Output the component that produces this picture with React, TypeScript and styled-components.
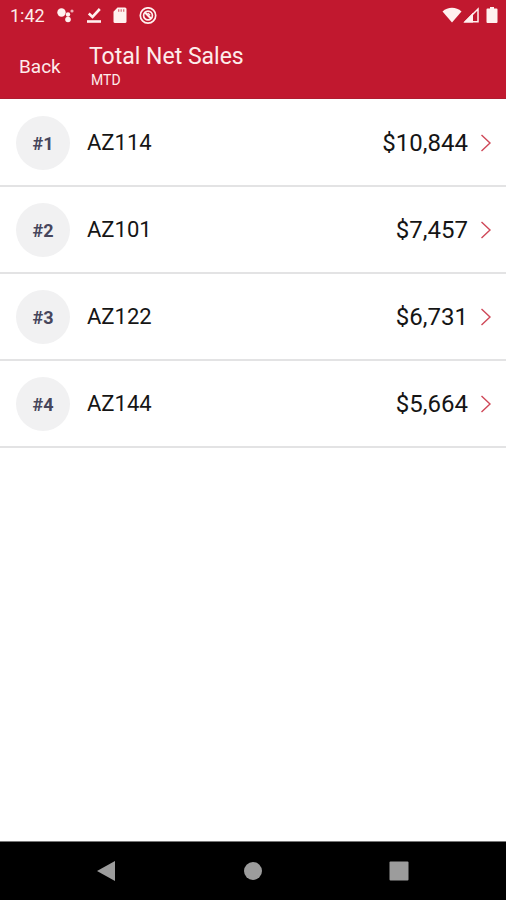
import React from "react";
import styled, { createGlobalStyle } from "styled-components";

const GlobalStyle = createGlobalStyle`
  *, *::before, *::after { box-sizing: border-box; }
  body { margin: 0; background: #fff; font-family: Roboto, "Liberation Sans", sans-serif; }
  button { font: inherit; color: inherit; border: 0; padding: 0; background: none; cursor: pointer; }
`;

const Screen = styled.div`
  display: flex;
  flex-direction: column;
  min-height: 100vh;
`;

const Header = styled.header`
  background: #c1182f;
  color: #fdeceb;
  border-bottom: 1px solid #b01c30;
`;

const StatusBar = styled.div`
  display: flex;
  justify-content: space-between;
  align-items: center;
  height: 32px;
  padding: 0 8px 0 10px;
`;

const Cluster = styled.div<{ $gap: number }>`
  display: flex;
  align-items: center;
  gap: ${({ $gap }) => $gap}px;
  svg { display: block; }
`;

const Clock = styled.time`
  font-size: 18px;
  line-height: 32px;
`;

const TitleBar = styled.div`
  display: flex;
  align-items: center;
  height: 66px;
  padding: 3px 19px 0;
`;

const BackButton = styled.button`
  width: 70px;
  font-size: 19px;
  line-height: 26px;
  text-align: left;
`;

const Titles = styled.div`
  display: flex;
  flex-direction: column;
`;

const Title = styled.h1`
  margin: 0;
  font-size: 23px;
  font-weight: 400;
  line-height: 26px;
`;

const Subtitle = styled.p`
  margin: 0;
  padding-left: 2px;
  font-size: 14px;
  line-height: 20px;
`;

const List = styled.ol`
  flex: 1;
  margin: 0;
  padding: 1px 0 0;
  list-style: none;
`;

const Item = styled.li`
  border-bottom: 2px solid #e3e3e4;
`;

const RowButton = styled.button`
  display: flex;
  align-items: center;
  width: 100%;
  padding: 16px 14px 15px 16px;
  text-align: left;
`;

const Rank = styled.span`
  display: flex;
  align-items: center;
  justify-content: center;
  width: 54px;
  height: 54px;
  border-radius: 50%;
  background: #f1f1f2;
  color: #47465c;
  font-size: 18px;
  font-weight: 700;
`;

const Store = styled.span`
  flex: 1;
  padding-left: 17px;
  color: #151515;
  font-size: 22px;
  line-height: 28px;
`;

const Amount = styled.span`
  padding-right: 12px;
  color: #151515;
  font-size: 24px;
  line-height: 28px;
`;

const NavBar = styled.nav`
  display: flex;
  justify-content: center;
  height: 59px;
  border-top: 1px solid #777;
  background: #000;
`;

const NavButton = styled.button`
  display: flex;
  align-items: center;
  justify-content: center;
  width: 146px;
`;

const stores = [
  { name: "AZ114", amount: "$10,844" },
  { name: "AZ101", amount: "$7,457" },
  { name: "AZ122", amount: "$6,731" },
  { name: "AZ144", amount: "$5,664" },
];

const ICON = "#fff1ef";

const AssistantIcon = () => (
  <svg width="18" height="18" viewBox="0 0 18 18" fill={ICON} aria-hidden="true">
    <circle cx="4.5" cy="5.5" r="4.2" />
    <circle cx="11" cy="7.5" r="2.2" />
    <circle cx="11" cy="12.5" r="2.8" />
    <circle cx="15" cy="4" r="1.6" opacity=".7" />
  </svg>
);

const DownloadDoneIcon = () => (
  <svg width="14" height="18" viewBox="0 0 14 18" fill="none" stroke={ICON} aria-hidden="true">
    <path d="M1.8 6.5l3.7 3.5L12.8 2" strokeWidth="2.6" />
    <path d="M0 14.5h14" strokeWidth="2.6" />
  </svg>
);

const SdCardIcon = () => (
  <svg width="14" height="18" viewBox="0 0 14 18" aria-hidden="true">
    <path d="M4.5 .5H12A1.5 1.5 0 0 1 13.5 2v12.5A1.5 1.5 0 0 1 12 16H2a1.5 1.5 0 0 1-1.5-1.5V4.8z" fill={ICON} />
    <path d="M5.7 2.3v2.4M8.2 2.3v2.4M10.7 2.3v2.4" stroke="#d9707d" strokeWidth="1.3" />
  </svg>
);

const BlockedIcon = () => (
  <svg width="18" height="18" viewBox="0 0 18 18" fill="none" stroke={ICON} aria-hidden="true">
    <circle cx="9" cy="8.5" r="7.7" strokeWidth="1.7" />
    <circle cx="9" cy="8.5" r="4.4" strokeWidth="1.7" />
    <path d="M5.8 5.3l6.4 6.4" strokeWidth="2" />
    <path d="M8.6 6.1l2.6 2.2" strokeWidth="1.4" />
  </svg>
);

const WifiIcon = () => (
  <svg width="20" height="18" viewBox="0 0 20 18" fill={ICON} aria-hidden="true">
    <path d="M10 15.5L.5 4.5C3.2 2 6.5 .8 10 .8s6.8 1.2 9.5 3.7z" />
  </svg>
);

const SignalIcon = () => (
  <svg width="16" height="18" viewBox="0 0 16 18" aria-hidden="true">
    <path d="M2.3 14.7H15V2z" fill="none" stroke={ICON} strokeWidth="1.5" />
    <path d="M.5 15.4L10 5.8v9.6z" fill={ICON} />
  </svg>
);

const BatteryIcon = () => (
  <svg width="18" height="18" viewBox="0 0 18 18" fill={ICON} aria-hidden="true">
    <path d="M10 0h4v1.5h2.5a1 1 0 0 1 1 1V15a1 1 0 0 1-1 1h-9a1 1 0 0 1-1-1V2.5a1 1 0 0 1 1-1H10z" />
  </svg>
);

const Chevron = () => (
  <svg width="12" height="18" viewBox="0 0 12 18" fill="none" stroke="#cf4858" strokeWidth="1.4" aria-hidden="true">
    <path d="M1.5 1l8.5 8-8.5 8" />
  </svg>
);

export default function App() {
  return (
    <Screen>
      <GlobalStyle />
      <Header>
        <StatusBar>
          <Cluster $gap={12}>
            <Clock>1:42</Clock>
            <AssistantIcon />
            <DownloadDoneIcon />
            <SdCardIcon />
            <BlockedIcon />
          </Cluster>
          <Cluster $gap={1}>
            <WifiIcon />
            <SignalIcon />
            <BatteryIcon />
          </Cluster>
        </StatusBar>
        <TitleBar>
          <BackButton type="button">Back</BackButton>
          <Titles>
            <Title>Total Net Sales</Title>
            <Subtitle>MTD</Subtitle>
          </Titles>
        </TitleBar>
      </Header>
      <List>
        {stores.map((store, index) => (
          <Item key={store.name}>
            <RowButton type="button">
              <Rank>#{index + 1}</Rank>
              <Store>{store.name}</Store>
              <Amount>{store.amount}</Amount>
              <Chevron />
            </RowButton>
          </Item>
        ))}
      </List>
      <NavBar aria-label="System navigation">
        <NavButton type="button" aria-label="Back">
          <svg width="20" height="20" viewBox="0 0 20 20" fill="#9c9c9c" aria-hidden="true">
            <path d="M0 10L18 0v20z" />
          </svg>
        </NavButton>
        <NavButton type="button" aria-label="Home">
          <svg width="20" height="20" viewBox="0 0 20 20" fill="#9c9c9c" aria-hidden="true">
            <circle cx="10" cy="10" r="9" />
          </svg>
        </NavButton>
        <NavButton type="button" aria-label="Recent apps">
          <svg width="20" height="20" viewBox="0 0 20 20" fill="#9c9c9c" aria-hidden="true">
            <rect x="0.5" y="0.5" width="19" height="19" rx="1" />
          </svg>
        </NavButton>
      </NavBar>
    </Screen>
  );
}
